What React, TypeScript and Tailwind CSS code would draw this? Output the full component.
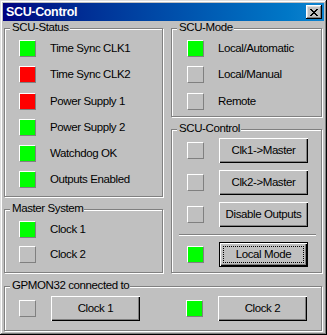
import React from 'react';

type LedColor = 'green' | 'red' | 'off';

const ledBg: Record<LedColor, string> = {
  green: 'bg-[#00ff00]',
  red: 'bg-[#ff0000]',
  off: 'bg-[#c0c0c0]',
};

const Led: React.FC<{ color: LedColor }> = ({ color }) => (
  <div
    className={`w-[17px] h-[17px] shrink-0 border border-t-white border-l-white border-b-[#808080] border-r-[#808080] ${ledBg[color]}`}
  />
);

const Button: React.FC<{ label: string; isDefault?: boolean; width?: string }> = ({ label, isDefault, width = 'w-[89px]' }) => {
  if (isDefault) {
    return (
      <button className={`relative ${width} h-[25px] shrink-0 bg-[#c0c0c0] border border-black shadow-[inset_1px_1px_0_#fff,inset_-1px_-1px_0_#000,inset_-2px_-2px_0_#808080] text-[11.5px] tracking-[-0.4px] text-black`}>
        <span className="absolute inset-[3px] border border-dotted border-black" />
        {label}
      </button>
    );
  }
  return (
    <button className={`${width} h-[25px] shrink-0 bg-[#c0c0c0] shadow-[inset_1px_1px_0_#fff,inset_-1px_-1px_0_#000,inset_-2px_-2px_0_#808080] text-[11.5px] tracking-[-0.4px] text-black`}>
      {label}
    </button>
  );
};

const GroupBox: React.FC<{ title: string; className?: string; children?: React.ReactNode }> = ({ title, className = '', children }) => (
  <div className={`relative border border-[#808080] shadow-[inset_1px_1px_0_#fff,1px_1px_0_#fff] ${className}`}>
    <span className="absolute left-[5px] -top-[8px] pl-[2px] pr-[1px] bg-[#c0c0c0] text-[11.5px] leading-[13px] tracking-[-0.4px] text-black whitespace-nowrap">
      {title}
    </span>
    {children}
  </div>
);

const StatusRow: React.FC<{ color: LedColor; label: string }> = ({ color, label }) => (
  <div className="flex items-center">
    <Led color={color} />
    <span className="ml-[14px] text-[11.5px] tracking-[-0.4px] text-black whitespace-nowrap">{label}</span>
  </div>
);

const CloseGlyph = () => (
  <svg width="8" height="7" viewBox="0 0 8 7" shapeRendering="crispEdges">
    <path
      fill="#000"
      d="M0 0h2v1H0zM6 0h2v1H6zM1 1h2v1H1zM5 1h2v1H5zM2 2h4v1H2zM3 3h2v1H3zM2 4h4v1H2zM1 5h2v1H1zM5 5h2v1H5zM0 6h2v1H0zM6 6h2v1H6z"
    />
  </svg>
);

const App: React.FC = () => {
  return (
    <div
      className="w-[327px] h-[335px] bg-[#c0c0c0] pt-[3px] px-[3px] flex flex-col shadow-[inset_-1px_-1px_0_#000,inset_1px_1px_0_#dfdfdf,inset_-2px_-2px_0_#808080,inset_2px_2px_0_#fff]"
      style={{ fontFamily: '"Liberation Sans", Arial, sans-serif' }}
    >
      {/* Title bar */}
      <div className="h-[18px] flex items-center justify-between bg-linear-to-r from-[#000080] to-[#1084d0]">
        <span className="pl-[3px] text-white font-bold text-[12.5px] tracking-[-0.35px]">SCU-Control</span>
        <div className="mr-[2px] w-[16px] h-[14px] bg-[#c0c0c0] flex items-center justify-center shadow-[inset_-1px_-1px_0_#000,inset_1px_1px_0_#fff,inset_-2px_-2px_0_#808080,inset_2px_2px_0_#dfdfdf]">
          <CloseGlyph />
        </div>
      </div>

      {/* Content */}
      <div className="pl-[1px] pr-[2px] pt-[7px] flex flex-col">
        <div className="flex gap-[8px]">
          {/* Left column */}
          <div className="w-[159px] flex flex-col">
            <GroupBox title="SCU-Status" className="h-[169px]">
              <div className="pt-[11px] pl-[14px] flex flex-col gap-[9px]">
                <StatusRow color="green" label="Time Sync CLK1" />
                <StatusRow color="red" label="Time Sync CLK2" />
                <StatusRow color="red" label="Power Supply 1" />
                <StatusRow color="green" label="Power Supply 2" />
                <StatusRow color="green" label="Watchdog OK" />
                <StatusRow color="green" label="Outputs Enabled" />
              </div>
            </GroupBox>
            <GroupBox title="Master System" className="h-[64px] mt-[12px]">
              <div className="pt-[11px] pl-[14px] flex flex-col gap-[8px]">
                <StatusRow color="green" label="Clock 1" />
                <StatusRow color="off" label="Clock 2" />
              </div>
            </GroupBox>
          </div>

          {/* Right column */}
          <div className="w-[151px] flex flex-col">
            <GroupBox title="SCU-Mode" className="h-[89px]">
              <div className="pt-[11px] pl-[15px] flex flex-col gap-[9px]">
                <StatusRow color="green" label="Local/Automatic" />
                <StatusRow color="off" label="Local/Manual" />
                <StatusRow color="off" label="Remote" />
              </div>
            </GroupBox>
            <GroupBox title="SCU-Control" className="h-[144px] mt-[12px]">
              <div className="pt-[8px] pl-[15px] flex flex-col gap-[7px]">
                <div className="flex items-center gap-[15px]">
                  <Led color="off" />
                  <Button label="Clk1->Master" />
                </div>
                <div className="flex items-center gap-[15px]">
                  <Led color="off" />
                  <Button label="Clk2->Master" />
                </div>
                <div className="flex items-center gap-[15px]">
                  <Led color="off" />
                  <Button label="Disable Outputs" />
                </div>
              </div>
              <div className="mt-[7px] ml-[7px] w-[137px] h-[2px] border-t border-t-[#808080] border-b border-b-white" />
              <div className="mt-[6px] pl-[15px] flex items-center gap-[15px]">
                <Led color="green" />
                <Button label="Local Mode" isDefault />
              </div>
            </GroupBox>
          </div>
        </div>

        {/* Bottom group */}
        <GroupBox title="GPMON32 connected to" className="h-[45px] mt-[13px]">
          <div className="pt-[9px] pl-[14px] flex items-center">
            <div className="flex items-center gap-[15px]">
              <Led color="off" />
              <Button label="Clock 1" />
            </div>
            <div className="ml-[46px] flex items-center gap-[15px]">
              <Led color="green" />
              <Button label="Clock 2" />
            </div>
          </div>
        </GroupBox>
      </div>
    </div>
  );
};

export default App;
